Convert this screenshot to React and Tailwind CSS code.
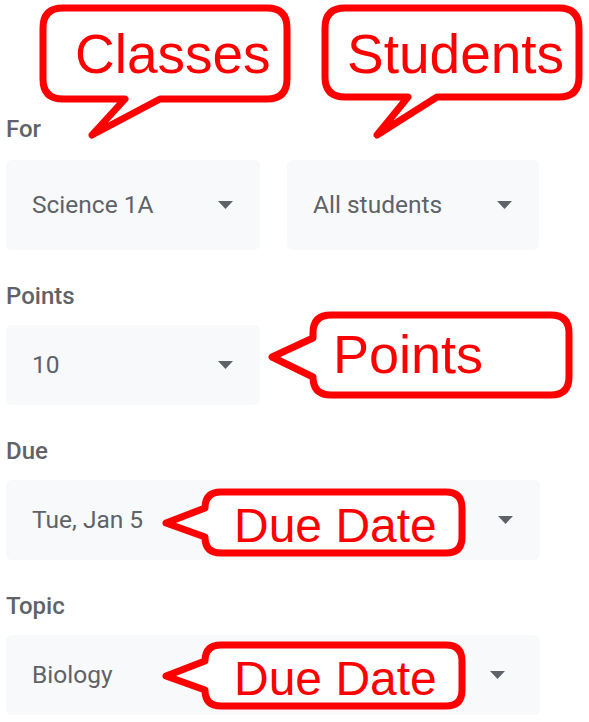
import React from 'react';

const Caret = () => (
  <svg width="15" height="8" viewBox="0 0 15 8" className="shrink-0">
    <polygon points="0,0 15,0 7.5,8" fill="#5f6368" />
  </svg>
);

function Select({ value, className = '' }) {
  return (
    <div className={`flex items-center justify-between rounded-md bg-[#f8f9fa] pl-[26px] pr-[27px] ${className}`}>
      <span className="text-[24.5px] leading-[28px] text-[#5f6368]">{value}</span>
      <Caret />
    </div>
  );
}

function Label({ children, className = '' }) {
  return (
    <div className={`text-[24px] leading-[28px] font-medium text-[#5f6368] ${className}`}>{children}</div>
  );
}

// red annotation bubbles drawn over the form
const bubbles = [
  'M 63 8 H 267 Q 287 8 287 28 V 79 Q 287 99 267 99 H 160 L 92 135 L 125 99 H 63 Q 43 99 43 79 V 28 Q 43 8 63 8 Z',
  'M 345 8 H 559 Q 579 8 579 28 V 77 Q 579 97 559 97 H 437 L 377 135 L 408 97 H 345 Q 325 97 325 77 V 28 Q 325 8 345 8 Z',
  'M 331 315 H 551 Q 569 315 569 333 V 377 Q 569 395 551 395 H 331 Q 313 395 313 377 L 272 357 L 313 338 V 333 Q 313 315 331 315 Z',
  'M 221 492 H 446 Q 462 492 462 508 V 537 Q 462 553 446 553 H 221 Q 205 553 205 537 L 166 523 L 205 508 Q 205 492 221 492 Z',
  'M 221 645 H 446 Q 462 645 462 661 V 690 Q 462 706 446 706 H 221 Q 205 706 205 690 L 166 676 L 205 661 Q 205 645 221 645 Z',
];

const notes = [
  { text: 'Classes', x: 75, y: 73, size: 55 },
  { text: 'Students', x: 347, y: 73, size: 55 },
  { text: 'Points', x: 333, y: 373, size: 54 },
  { text: 'Due Date', x: 234, y: 542, size: 48 },
  { text: 'Due Date', x: 234, y: 695, size: 48 },
];

export default function App() {
  return (
    <div className="relative w-[589px] h-[722px] overflow-hidden bg-white" style={{ fontFamily: 'Roboto, "Noto Sans", sans-serif' }}>
      {/* --- FORM --- */}
      <div className="flex flex-col pl-[6px] pt-[115px]">
        <Label>For</Label>
        <div className="mt-[17px] flex gap-[27px]">
          <Select value="Science 1A" className="w-[254px] h-[90px]" />
          <Select value="All students" className="w-[252px] h-[90px]" />
        </div>

        <Label className="mt-[32px]">Points</Label>
        <Select value="10" className="mt-[15px] w-[254px] h-[80px]" />

        <Label className="mt-[32px]">Due</Label>
        <Select value="Tue, Jan 5" className="mt-[15px] w-[534px] h-[80px]" />

        <Label className="mt-[32px]">Topic</Label>
        <Select value="Biology" className="mt-[15px] w-[534px] h-[80px] !pr-[35px]" />
      </div>

      {/* --- CALLOUTS --- */}
      <svg className="absolute inset-0 pointer-events-none" width="589" height="722" viewBox="0 0 589 722">
        {bubbles.map((d, i) => (
          <path key={i} d={d} fill="white" stroke="#ff0000" strokeWidth="7" strokeLinejoin="round" />
        ))}
        {notes.map((n, i) => (
          <text key={i} x={n.x} y={n.y} fill="#ff0000" fontSize={n.size} fontFamily='"Liberation Sans", Arial, sans-serif'>
            {n.text}
          </text>
        ))}
      </svg>
    </div>
  );
}
